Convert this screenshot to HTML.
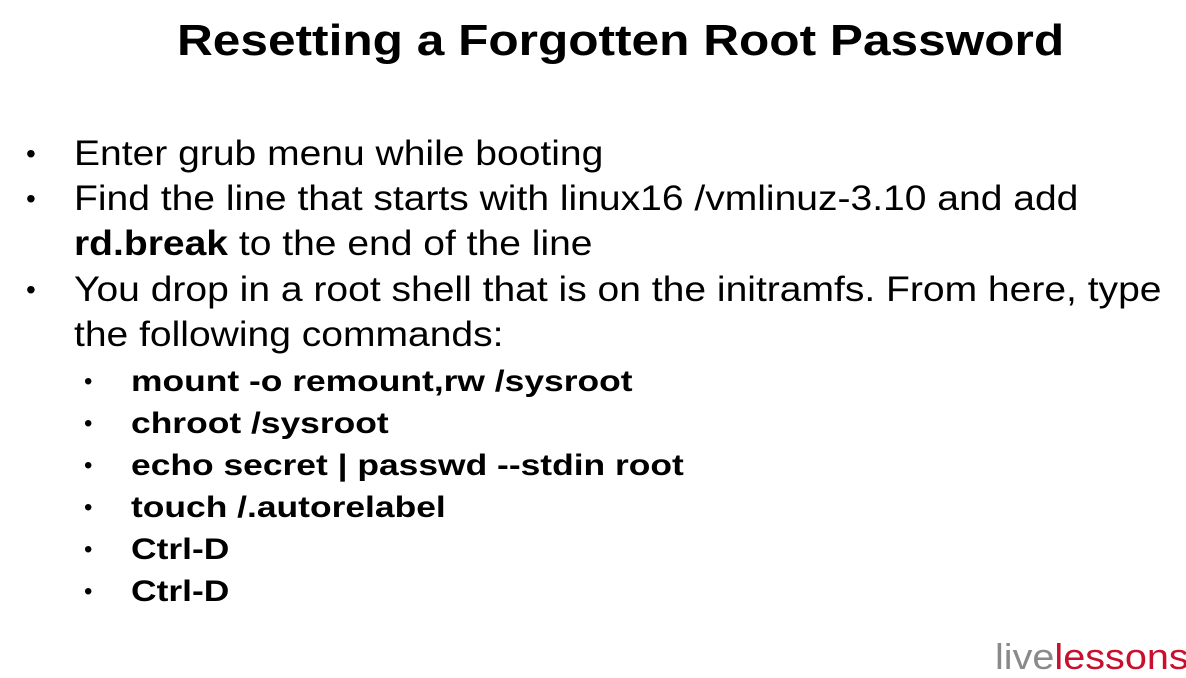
<!DOCTYPE html>
<html><head><style>
body{margin:0;width:1186px;height:651px;background:#fff;overflow:hidden;position:relative;font-family:"Liberation Sans",Arial,sans-serif;color:#000}
h1{position:absolute;top:16px;left:177px;margin:0;font-size:44px;font-weight:bold;white-space:nowrap;transform:scaleX(1.127);transform-origin:left}
.l{position:absolute;left:74px;font-size:35px;white-space:nowrap;line-height:45px;transform:scaleX(1.115);transform-origin:left}
.b{position:absolute;left:26px;font-size:28px;line-height:45px}
.s{position:absolute;left:131px;font-size:30px;font-weight:bold;white-space:nowrap;line-height:42px;transform:scaleX(1.18);transform-origin:left}
.sb{position:absolute;left:84px;font-size:24px;line-height:42px}
.logo{position:absolute;left:995px;top:636px;font-size:36px;white-space:nowrap;transform:scaleX(1.1);transform-origin:left}
</style></head><body>
<h1>Resetting a Forgotten Root Password</h1>
<div class="b" style="top:131px">•</div><div class="l" style="top:131px">Enter grub menu while booting</div>
<div class="b" style="top:176px">•</div><div class="l" style="top:176px">Find the line that starts with linux16 /vmlinuz-3.10 and add</div>
<div class="l" style="top:221px"><b>rd.break</b> to the end of the line</div>
<div class="b" style="top:267px">•</div><div class="l" style="top:267px">You drop in a root shell that is on the initramfs. From here, type</div>
<div class="l" style="top:312px">the following commands:</div>
<div class="sb" style="top:361px">•</div><div class="s" style="top:361px">mount -o remount,rw /sysroot</div>
<div class="sb" style="top:403px">•</div><div class="s" style="top:403px">chroot /sysroot</div>
<div class="sb" style="top:445px">•</div><div class="s" style="top:445px">echo secret | passwd --stdin root</div>
<div class="sb" style="top:487px">•</div><div class="s" style="top:487px">touch /.autorelabel</div>
<div class="sb" style="top:529px">•</div><div class="s" style="top:529px">Ctrl-D</div>
<div class="sb" style="top:571px">•</div><div class="s" style="top:571px">Ctrl-D</div>
<div class="logo"><span style="color:#8a8a8a">live</span><span style="color:#c8102e">lessons</span></div>
</body></html>
